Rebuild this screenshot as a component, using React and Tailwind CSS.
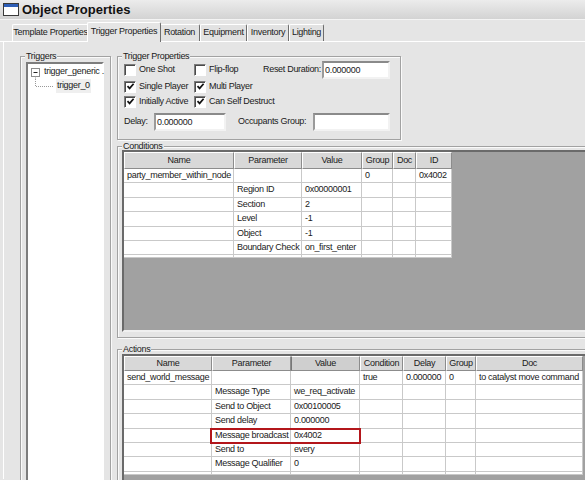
import React from 'react'

const condCols = [
  { name: 'Name', w: 110 },
  { name: 'Parameter', w: 68 },
  { name: 'Value', w: 60 },
  { name: 'Group', w: 31 },
  { name: 'Doc', w: 23 },
  { name: 'ID', w: 36 },
]

const condRows = [
  ['party_member_within_node', '', '', '0', '', '0x4002'],
  ['', 'Region ID', '0x00000001', '', '', ''],
  ['', 'Section', '2', '', '', ''],
  ['', 'Level', '-1', '', '', ''],
  ['', 'Object', '-1', '', '', ''],
  ['', 'Boundary Check', 'on_first_enter', '', '', ''],
]

const actCols = [
  { name: 'Name', w: 88 },
  { name: 'Parameter', w: 79 },
  { name: 'Value', w: 69, pressed: true },
  { name: 'Condition', w: 43 },
  { name: 'Delay', w: 43 },
  { name: 'Group', w: 30 },
  { name: 'Doc', w: 107 },
]

const actRows = [
  ['send_world_message', '', '', 'true', '0.000000', '0', 'to catalyst move command'],
  ['', 'Message Type', 'we_req_activate', '', '', '', ''],
  ['', 'Send to Object', '0x00100005', '', '', '', ''],
  ['', 'Send delay', '0.000000', '', '', '', ''],
  ['', 'Message broadcast', '0x4002', '', '', '', ''],
  ['', 'Send to', 'every', '', '', '', ''],
  ['', 'Message Qualifier', '0', '', '', '', ''],
]

const tabs = [
  { label: 'Template Properties', w: 77 },
  { label: 'Trigger Properties', w: 70, active: true },
  { label: 'Rotation', w: 41 },
  { label: 'Equipment', w: 47 },
  { label: 'Inventory', w: 42 },
  { label: 'Lighting', w: 35 },
]

function Check({ checked, label }) {
  return (
    <div className="flex items-center gap-[3px] whitespace-nowrap">
      <div className="flex h-[12px] w-[12px] shrink-0 items-center justify-center border border-t-[#7c7c7c] border-l-[#7c7c7c] border-b-white border-r-white bg-white shadow-[inset_1px_1px_0_#4a4a4a]">
        {checked && (
          <svg width="9" height="9" viewBox="0 0 9 9">
            <path d="M1.5 4.2 L3.6 6.4 L7.6 1.8" fill="none" stroke="#111" strokeWidth="1.7" />
          </svg>
        )}
      </div>
      <span>{label}</span>
    </div>
  )
}

function Input({ value, className }) {
  return (
    <div className={'h-[18px] shrink-0 border-2 border-t-[#8a8a8a] border-l-[#9a9a9a] border-b-[#f2f2f2] border-r-[#f2f2f2] bg-white pl-[1px] leading-[14px] ' + className}>
      {value}
    </div>
  )
}

// win2k style etched group box; the caption sits over the top border
function Group({ title, className, children }) {
  return (
    <div className={'relative shrink-0 border border-[#a2a2a2] shadow-[1px_1px_0_#fafafa,inset_1px_1px_0_#fafafa] ' + className}>
      <span className="absolute -top-[6px] left-[4px] bg-[#e5e5e5] px-[1px] leading-[11px]">{title}</span>
      {children}
    </div>
  )
}

function Grid({ cols, rows, header, height, children }) {
  return (
    <div
      className="relative w-[600px] overflow-hidden border-2 border-t-[#6a6a6a] border-l-[#6a6a6a] border-b-[#f0f0f0] border-r-[#f0f0f0] bg-[#a1a1a1]"
      style={{ height }}
    >
      <div className="flex" style={{ height: header }}>
        {cols.map((c) => (
          <div
            key={c.name}
            style={{ width: c.w }}
            className={
              'flex shrink-0 items-center justify-center border border-t-white border-r-[#8c8c8c] border-b-[#8c8c8c] ' +
              (c.pressed ? 'border-l-[#777] bg-[#cfcfcf]' : 'border-l-white bg-[#d8d8d8]')
            }
          >
            {c.name}
          </div>
        ))}
      </div>
      {rows.map((r, i) => (
        <div key={i} className="flex h-[14.4px]">
          {cols.map((c, j) => (
            <div
              key={j}
              style={{ width: c.w }}
              className="shrink-0 overflow-hidden whitespace-nowrap border-r border-b border-[#c9c9c9] bg-white pl-[3px] leading-[13.4px]"
            >
              {r[j]}
            </div>
          ))}
        </div>
      ))}
      <div className="flex h-[3px]">
        {cols.map((c, j) => (
          <div key={j} style={{ width: c.w }} className="shrink-0 border-r border-b border-[#c9c9c9] bg-white" />
        ))}
      </div>
      {children}
    </div>
  )
}

export default function App() {
  return (
    <div className="h-[480px] w-[585px] overflow-hidden whitespace-nowrap bg-[#e5e5e5] font-['Liberation_Sans',Arial,sans-serif] text-[9px] tracking-[-0.3px] text-[#1a1a1a]">
      {/* title bar */}
      <div className="flex h-[20px] items-center gap-[3px] border-b border-[#f4f4f4] bg-gradient-to-b from-[#ececec] to-[#d3d3d3] pl-[3px]">
        <svg width="16" height="13" viewBox="0 0 16 13">
          <rect x="0.5" y="0.5" width="15" height="12" fill="#fff" stroke="#3a3a3a" />
          <rect x="1" y="1" width="14" height="3" fill="#2f5fb8" />
        </svg>
        <span className="text-[13px] font-bold tracking-[0px] text-[#111]">Object Properties</span>
      </div>

      {/* tabs */}
      <div className="flex h-[22px] w-[800px] items-end border-b border-white pl-[12px]">
        {tabs.map((t) =>
          t.active ? (
            <div
              key={t.label}
              style={{ width: t.w + 4 }}
              className="relative z-10 -mx-[2px] -mb-px flex h-[20px] items-center justify-center rounded-t-[2px] border-t border-l border-r border-t-white border-l-white border-r-[#6e6e6e] bg-[#e5e5e5] pb-[2px]"
            >
              {t.label}
            </div>
          ) : (
            <div
              key={t.label}
              style={{ width: t.w }}
              className="flex h-[17px] items-center justify-center rounded-t-[2px] border-t border-l border-r border-t-white border-l-white border-r-[#6e6e6e] bg-[#e2e2e2]"
            >
              {t.label}
            </div>
          )
        )}
      </div>

      {/* panel */}
      <div className="ml-[3px] flex h-[437px] border-l border-white">
        <Group title="Triggers" className="ml-[16px] mt-[14px] h-[440px] w-[91px] px-[5px] pt-[5px]">
          <div className="h-[420px] w-[78px] border-2 border-t-[#7d7d7d] border-l-[#7d7d7d] border-b-white border-r-white bg-white pt-[1px]">
            <div className="flex h-[14px] items-center pl-[2px]">
              <svg width="12" height="14" viewBox="0 0 12 14" className="shrink-0">
                <rect x="1.5" y="3.5" width="8" height="8" fill="#fff" stroke="#8c8c8c" />
                <path d="M3.5 7.5 H7.5" stroke="#222" />
                <path d="M5.5 11.5 V14" stroke="#999" strokeDasharray="1 1" />
              </svg>
              <span className="ml-[2px]">trigger_generic .</span>
            </div>
            <div className="flex h-[14px] items-center pl-[2px]">
              <svg width="26" height="14" viewBox="0 0 26 14" className="shrink-0">
                <path d="M5.5 0 V7.5 H24" fill="none" stroke="#999" strokeDasharray="1 1" />
              </svg>
              <span className="bg-[#efefef] px-[1px]">trigger_0</span>
            </div>
          </div>
        </Group>

        <div className="ml-[6px] flex w-[520px] shrink-0 flex-col pt-[14px]">
          <Group title="Trigger Properties" className="h-[84px] w-[284px] pl-[6px] pr-[9px] pt-[4px]">
            <div className="flex h-[18px] items-center">
              <div className="w-[70px]"><Check label="One Shot" /></div>
              <div className="w-[69px]"><Check label="Flip-flop" /></div>
              <span className="w-[59px]">Reset Duration:</span>
              <Input value="0.000000" className="w-[68px]" />
            </div>
            <div className="flex h-[15px] items-center">
              <div className="w-[70px]"><Check checked label="Single Player" /></div>
              <Check checked label="Multi Player" />
            </div>
            <div className="flex h-[15px] items-center">
              <div className="w-[70px]"><Check checked label="Initially Active" /></div>
              <Check checked label="Can Self Destruct" />
            </div>
            <div className="mt-[4px] flex h-[18px] items-center">
              <span className="w-[30px]">Delay:</span>
              <Input value="0.000000" className="w-[72px]" />
              <span className="ml-[12px] w-[75px]">Occupants Group:</span>
              <Input value="" className="w-[77px]" />
            </div>
          </Group>

          <Group title="Conditions" className="mt-[6px] h-[192px] w-[520px] pl-[4px] pt-[3px]">
            <Grid cols={condCols} rows={condRows} header={17} height={182} />
          </Group>

          <Group title="Actions" className="mt-[11px] h-[160px] w-[520px] pl-[4px] pt-[4px]">
            <Grid cols={actCols} rows={actRows} header={15} height={140}>
              <div className="absolute left-[86px] top-[72px] h-[16px] w-[151px] border-2 border-[#b3161b]" />
            </Grid>
          </Group>
        </div>
      </div>
    </div>
  )
}
